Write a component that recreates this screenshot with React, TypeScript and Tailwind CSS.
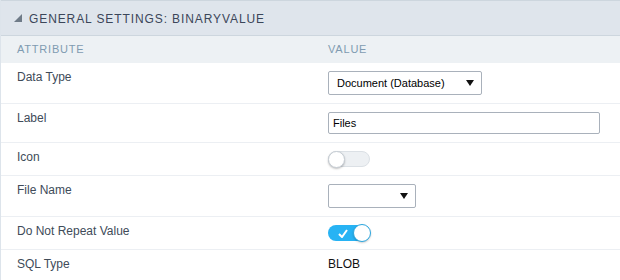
import React from 'react';

const font = "font-['Liberation_Sans',Arial,sans-serif]";

const Arrow = () => (
  <svg width="8" height="6" viewBox="0 0 8 6" className="shrink-0">
    <path d="M0 0 H8 L4 6 Z" fill="#111" />
  </svg>
);

const Select = ({ value, width }: { value: string; width: string }) => (
  <div
    className={`flex h-[24px] items-center justify-between rounded-[2px] border border-[#a9b1bb] bg-white pl-[8px] pr-[7px] text-[11px] text-black ${width}`}
  >
    <span>{value}</span>
    <Arrow />
  </div>
);

const Toggle = ({ on }: { on: boolean }) =>
  on ? (
    <span className="relative inline-block h-[16px] w-[42px] rounded-full bg-[#27b3f4]">
      <svg width="10" height="9" viewBox="0 0 10 9" className="absolute left-[10px] top-[4px]">
        <path d="M1 5 L4 8 L9 1" stroke="#fff" strokeWidth="2" fill="none" />
      </svg>
      <span className="absolute right-[-1px] top-[-1px] h-[18px] w-[18px] rounded-full border border-[#2aa6df] bg-white shadow-[0_1px_2px_rgba(0,0,0,0.2)]" />
    </span>
  ) : (
    <span className="relative inline-block h-[16px] w-[42px] rounded-full border border-[#dbe0e5] bg-[#edf0f3]">
      <span className="absolute left-[-1px] top-[-1px] h-[17px] w-[17px] rounded-full border border-[#c6cdd4] bg-white shadow-[0_1px_2px_rgba(0,0,0,0.25)]" />
    </span>
  );

interface RowProps {
  label: string;
  children: React.ReactNode;
  text?: boolean;
}

const Row = ({ label, children, text }: RowProps) => (
  <div className={`grid grid-cols-[311px_1fr] ${text ? '' : 'border-b border-[#eceff3]'}`}>
    <div className="py-[7px] pl-[16px] text-[12px] leading-[14px] text-[#404b59]">{label}</div>
    <div className={text ? 'py-[7px] pl-[16px] text-[12px] leading-[14px] text-[#111]' : 'py-[8px] pl-[16px] pr-[20px]'}>
      {children}
    </div>
  </div>
);

export default function App() {
  return (
    <div className={`h-[280px] w-[620px] overflow-hidden border-l border-[#dde4eb] bg-white ${font}`}>
      {/* Title bar */}
      <div className="flex h-[36px] items-center gap-[7px] border-y border-[#cdd6de] bg-[#dfe5ec] pl-[13px]">
        <svg width="8" height="8" viewBox="0 0 8 8">
          <path d="M8 0 V8 H0 Z" fill="#6f7b88" />
        </svg>
        <span className="pt-[1px] text-[12px] tracking-[0.9px] text-[#3b4659]">GENERAL SETTINGS: BINARYVALUE</span>
      </div>

      {/* Column headings */}
      <div className="grid h-[27px] grid-cols-[311px_1fr] items-center bg-[#edf1f4] text-[11px] tracking-[0.8px] text-[#7f9bb1]">
        <div className="pl-[16px]">ATTRIBUTE</div>
        <div className="pl-[16px]">VALUE</div>
      </div>

      <Row label="Data Type">
        <Select value="Document (Database)" width="w-[154px]" />
      </Row>
      <Row label="Label">
        <div className="flex h-[22px] items-center rounded-[2px] border border-[#a9b1bb] pl-[4px] text-[11px] text-black">
          Files
        </div>
      </Row>
      <Row label="Icon">
        <div className="flex h-[16px] items-center">
          <Toggle on={false} />
        </div>
      </Row>
      <Row label="File Name">
        <Select value="" width="w-[88px]" />
      </Row>
      <Row label="Do Not Repeat Value">
        <div className="flex h-[16px] items-center">
          <Toggle on />
        </div>
      </Row>
      <Row label="SQL Type" text>
        BLOB
      </Row>
    </div>
  );
}
